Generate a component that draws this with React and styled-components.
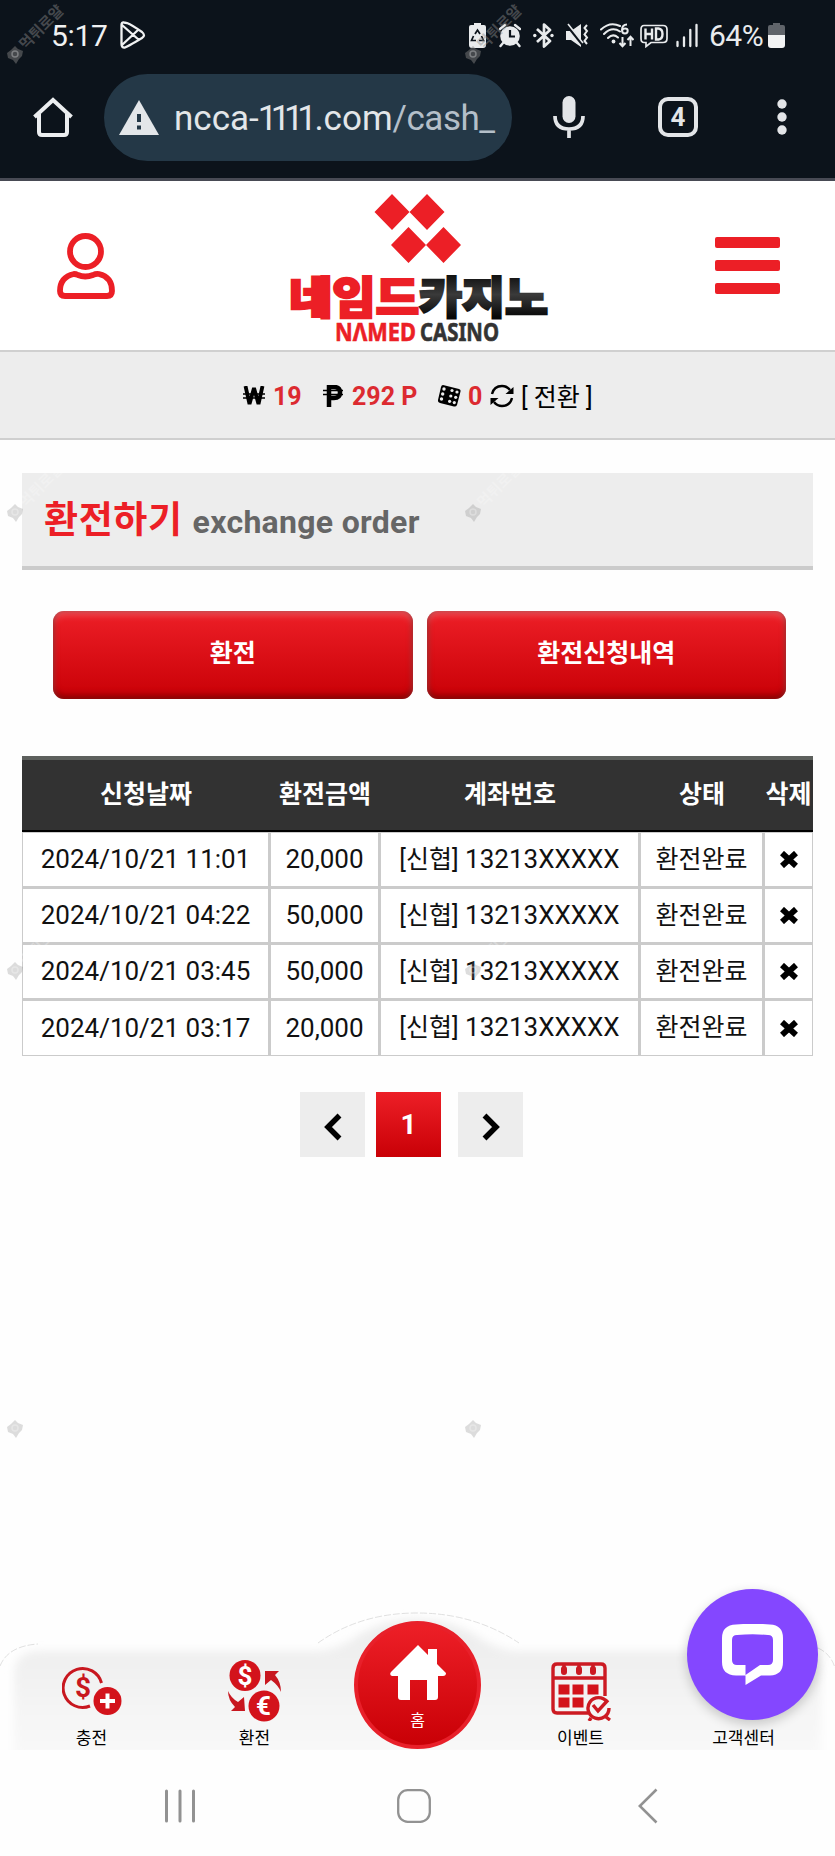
import React from 'react';
import styled, { createGlobalStyle } from 'styled-components';

const orders = [
  { date: '2024/10/21 11:01', amount: '20,000' },
  { date: '2024/10/21 04:22', amount: '50,000' },
  { date: '2024/10/21 03:45', amount: '50,000' },
  { date: '2024/10/21 03:17', amount: '20,000' },
];

const marks = [0, 1, 2, 3];

function StatusIcons() {
  return (
    <>
      <Icon width="17" height="25" viewBox="0 0 17 25" $left={0}>
        <path d="M5 0h7v2h3q2 0 2 2v18q0 3-3 3H3q-3 0-3-3V4q0-2 2-2h3z" fill="#e9ebed" />
        <path
          d="M6 11l2.500-4 2.500 4M12.500 13l2 4.500h-4.500M7 17.500H2.500l2-4.500"
          fill="none"
          stroke="#0c131b"
          strokeWidth="1.700"
        />
      </Icon>
      <Icon width="22" height="25" viewBox="0 0 22 25" $left={13}>
        <circle cx="11" cy="13" r="9.800" fill="#e9ebed" />
        <path
          d="M1 6l5-4M21 6l-5-4M4 20l-2.500 3M18 20l2.500 3"
          stroke="#e9ebed"
          strokeWidth="2.400"
          strokeLinecap="round"
        />
        <path d="M11 7v6.500h5" fill="none" stroke="#0c131b" strokeWidth="2.200" />
      </Icon>
      <Icon width="21" height="25" viewBox="0 0 21 25" $left={12}>
        <path
          d="M4 6l13 12-6 5.500V1.500L17 7 4 19"
          fill="none"
          stroke="#e9ebed"
          strokeWidth="2.700"
          strokeLinejoin="round"
        />
        <circle cx="1.800" cy="12.500" r="1.700" fill="#e9ebed" />
        <circle cx="19" cy="12.500" r="1.700" fill="#e9ebed" />
      </Icon>
      <Icon width="23" height="25" viewBox="0 0 23 25" $left={12}>
        <path d="M0 8h5l10-7v23L5 17H0z" fill="#e9ebed" />
        <path d="M1 2l16 20" stroke="#0c131b" strokeWidth="3" />
        <path d="M2 1l15 19" stroke="#e9ebed" strokeWidth="1.600" />
        <path
          d="M21 2l-2.500 3 2.500 3-2.500 3.500 2.500 3-2.500 3.500 2.500 3"
          fill="none"
          stroke="#e9ebed"
          strokeWidth="2"
        />
      </Icon>
      <Icon width="34" height="25" viewBox="0 0 34 25" $left={11}>
        <path
          d="M1 6.500Q10-2 20 3M4 11Q12 3 20 8.500M8 15q5-5 10-.5"
          fill="none"
          stroke="#e9ebed"
          strokeWidth="2"
          strokeLinecap="round"
        />
        <circle cx="13.500" cy="18.500" r="1.900" fill="#e9ebed" />
        <path
          d="M27 1.500q-5 0-5 5.500 0 3.500 3 3.500 2.700 0 2.700-2.700 0-2.300-2.700-2.300-2 0-3 2M22.500 14v9M19.500 20l3 3.200 3-3.200M30.500 23v-9M27.500 17l3-3.200 3 3.200"
          fill="none"
          stroke="#e9ebed"
          strokeWidth="2"
        />
      </Icon>
      <Icon width="28" height="25" viewBox="0 0 28 25" $left={6}>
        <path
          d="M4 2.500h19q4 0 4 4v9q0 4-4 4H11l-5 4v-4H4q-3 0-3-4v-9q0-4 3-4z"
          fill="none"
          stroke="#e9ebed"
          strokeWidth="1.700"
        />
        <path
          d="M5.500 5.500v11M12 5.500v11M5.500 11H12M16 5.500v11h2.500q4-.5 4-5.500t-4-5.500z"
          fill="none"
          stroke="#e9ebed"
          strokeWidth="2.400"
        />
      </Icon>
      <Icon width="22" height="25" viewBox="0 0 22 25" $left={8}>
        <path
          d="M1.500 19v4M8 14.500V23M14.300 7v16M20.500 2v21"
          stroke="#e9ebed"
          strokeWidth="2.300"
          strokeLinecap="round"
        />
      </Icon>
      <Percent>64%</Percent>
      <Icon width="17" height="25" viewBox="0 0 17 25" $left={0}>
        <path d="M5 0h7v2h3q2 0 2 2v8H0V4q0-2 2-2h3z" fill="#60646a" />
        <path d="M0 12h17v10q0 3-3 3H3q-3 0-3-3z" fill="#f2f3f4" />
      </Icon>
    </>
  );
}

function Logo() {
  return (
    <LogoBox width="260" height="154" viewBox="0 0 260 154">
      <defs>
        <linearGradient id="ink" x1="0" y1="0" x2="0" y2="1">
          <stop offset="0.2" stopColor="#111" />
          <stop offset="0.5" stopColor="#3a3a3a" />
          <stop offset="0.85" stopColor="#080808" />
        </linearGradient>
      </defs>
      <path
        d="M103 2l17.500 18L103 38 85.500 20zM138 2l17.500 18L138 38l-17.500-18zM119.500 35l17.500 18-17.500 18L102 53zM154.500 35L172 53l-17.500 18L137 53z"
        fill="#ec1f26"
      />
      <LogoText x="0" y="121.500" textLength="130" lengthAdjust="spacingAndGlyphs" fill="#ec1f26" stroke="#ec1f26">
        네임드
      </LogoText>
      <LogoText x="130" y="121.500" textLength="129" lengthAdjust="spacingAndGlyphs" fill="url(#ink)" stroke="url(#ink)">
        카지노
      </LogoText>
      <LogoSub x="46" y="149" textLength="81" lengthAdjust="spacingAndGlyphs" fill="#ec1f26" stroke="#ec1f26">
        NΛMED
      </LogoSub>
      <LogoSub x="131" y="149" textLength="79" lengthAdjust="spacingAndGlyphs" fill="#333" stroke="#333">
        CASINO
      </LogoSub>
    </LogoBox>
  );
}

function Watermark() {
  return (
    <MarkLayer>
      {marks.map((row) =>
        [0, 1].map((col) => (
          <Mark key={`${row}-${col}`} $row={row} $col={col} $dark={row === 0}>
            <svg width="18" height="20" viewBox="0 0 18 20">
              <path d="M9 1l3 3 5 2-1 5-3 3-3 5-3-4-5-2-1-5 4-3z" fill="currentColor" />
              <circle cx="9" cy="9" r="3" fill="none" stroke="#fff" strokeOpacity="0.3" strokeWidth="1.500" />
            </svg>
            <MarkText $dark={row === 0}>먹튀로얄</MarkText>
          </Mark>
        ))
      )}
    </MarkLayer>
  );
}

function TabBar() {
  return (
    <BottomBar>
      <BarShape width="835" height="160" viewBox="0 0 835 160">
        <defs>
          <linearGradient id="bar" x1="0" y1="0" x2="0" y2="1">
            <stop offset="0" stopColor="#ececec" />
            <stop offset="1" stopColor="#fafafa" />
          </linearGradient>
          <filter id="soft" x="-5%" y="-10%" width="110%" height="120%">
            <feGaussianBlur stdDeviation="4" />
          </filter>
          <clipPath id="cut">
            <rect width="835" height="151" />
          </clipPath>
        </defs>
        <g clipPath="url(#cut)">
          <path
            d="M14 165V76q0-24 26-24h280q22-3 42-18 54-28 110 0 20 15 42 18h280q26 0 27 24v89z"
            fill="url(#bar)"
            filter="url(#soft)"
          />
        </g>
        <path
          d="M0 67Q8 47 38 45M318 44Q360 14 417 14T519 44M818 49q13 6 17 20"
          fill="none"
          stroke="#d2d2d2"
          strokeWidth="0.700"
          strokeDasharray="7 2"
        />
      </BarShape>
      <Tab>
        <svg width="60" height="50" viewBox="0 0 60 50">
          <path
            d="M39.500 17A19.500 19.500 0 1 0 28 40"
            fill="none"
            stroke="#c8171f"
            strokeWidth="3"
          />
          <TabSign x="21" y="31" $size={28} fill="#c8171f" textAnchor="middle">$</TabSign>
          <circle cx="45.500" cy="35" r="14" fill="#d3131b" />
          <path d="M45.500 27.500v15M38 35h15" stroke="#fff" strokeWidth="4" />
        </svg>
        <TabLabel>충전</TabLabel>
      </Tab>
      <Tab>
        <svg width="54" height="62" viewBox="0 0 54 62">
          <circle cx="17" cy="15.500" r="15.500" fill="#d3131b" />
          <TabSign x="17" y="24.500" $size={26} fill="#fff" textAnchor="middle">$</TabSign>
          <circle cx="36" cy="46" r="15.500" fill="#d3131b" />
          <TabSign x="35.500" y="55" $size={26} fill="#fff" textAnchor="middle">€</TabSign>
          <path
            d="M37 11h14l-4 4q6 7 6 17-3-7-10-12l-6 5zM17 51H3l4-4Q0 40 0 31q3 7 10 11l6-5z"
            fill="#c8171f"
          />
        </svg>
        <TabLabel>환전</TabLabel>
      </Tab>
      <HomeTab>
        <HomeButton>
          <svg width="56" height="56" viewBox="0 0 56 56">
            <path
              d="M28 0l10 10V4h9v15l9 9q0 3-3 3h-5v21q0 3-3 3h-8V35H20v20h-9q-3 0-3-3V31H2q-3-1-1-4z"
              fill="#fff"
            />
          </svg>
          <HomeLabel>홈</HomeLabel>
        </HomeButton>
      </HomeTab>
      <Tab>
        <svg width="60" height="60" viewBox="0 0 60 60">
          <path
            d="M37 52H6q-4 0-4-4V7q0-4 4-4h44q4 0 4 4v28M2 17h52M13 3v6M28 3v6M42 3v6"
            fill="none"
            stroke="#cc1a22"
            strokeWidth="3.400"
          />
          <path
            d="M13 8v3M28 8v3M42 8v3"
            stroke="#cc1a22"
            strokeWidth="6"
            strokeLinecap="round"
          />
          <path
            d="M7.500 23.500h11v10h-11zM21.500 23.500h11v10h-11zM36.500 23.500h11v10h-11zM7.500 36.500h11v10h-11zM21.500 36.500h11v10h-11z"
            fill="#d3131b"
          />
          <path
            d="M56 41a10.500 10.500 0 1 0 2 6M42 44l5 6 10-11M40 57l-2 3M55 56l4 3"
            fill="none"
            stroke="#cc1a22"
            strokeWidth="3.400"
          />
        </svg>
        <TabLabel>이벤트</TabLabel>
      </Tab>
      <Tab>
        <TabLabel>고객센터</TabLabel>
      </Tab>
      <ChatButton>
        <svg width="62" height="62" viewBox="0 0 62 62">
          <path
            d="M14 .5Q31-1 48 .5 61 1 61 14v24q0 13-13 13.500h-9L23.500 61v-9.500H14Q0 51 0 38V14Q0 1 14 .5zM15 11q-5 0-5 5v20q0 5 5 5h8.500v10L38 41h8q5 0 5-5V16q0-5-5-5-15-1.500-31 0z"
            fill="#fff"
            fillRule="evenodd"
          />
        </svg>
      </ChatButton>
    </BottomBar>
  );
}

function App() {
  return (
    <Page>
      <GlobalStyle />
      <StatusBar>
        <Clock>5:17</Clock>
        <svg width="26" height="28" viewBox="0 0 26 28">
          <path
            d="M4 1.500q-2.500-.5-2.500 2.500v19q0 4 3.500 3.500 2-.5 17-9.500 4-2.500 0-6Q12 4 7 2zM2 4l17 15M2 24L18 9"
            fill="none"
            stroke="#f0f1f2"
            strokeWidth="2.300"
          />
        </svg>
        <StatusRight>
          <StatusIcons />
        </StatusRight>
      </StatusBar>
      <AddressBar>
        <svg width="40" height="40" viewBox="0 0 40 40">
          <path
            d="M1.500 20L20 3l18.500 17M6 17v18q0 3 3 3h22q3 0 3-3V17"
            fill="none"
            stroke="#eceef0"
            strokeWidth="4"
          />
        </svg>
        <UrlBox>
          <svg width="40" height="35" viewBox="0 0 40 35">
            <path d="M20 0l20 35H0z" fill="#e3e6e9" />
            <path d="M20 14v8M20 25.500v4" stroke="#243847" strokeWidth="4" />
          </svg>
          <Url>
            ncca-<b>1111</b>.com<span>/cash_</span>
          </Url>
        </UrlBox>
        <MicIcon width="32" height="42" viewBox="0 0 32 42">
          <rect x="9.500" width="13" height="27" rx="6.500" fill="#e3e5e8" />
          <path
            d="M2 20q0 13 14 13t14-13M16 33v9"
            fill="none"
            stroke="#e3e5e8"
            strokeWidth="3.700"
          />
        </MicIcon>
        <TabCount>4</TabCount>
        <svg width="10" height="36" viewBox="0 0 10 36">
          <circle cx="5" cy="5" r="4.700" fill="#e3e5e8" />
          <circle cx="5" cy="18" r="4.700" fill="#e3e5e8" />
          <circle cx="5" cy="31" r="4.700" fill="#e3e5e8" />
        </svg>
      </AddressBar>
      <Header>
        <svg width="58" height="66" viewBox="0 0 58 66">
          <circle cx="28.500" cy="18.500" r="15.500" fill="none" stroke="#ec1f26" strokeWidth="5.800" />
          <path
            d="M17 41q-14 3-14 17 0 5 5 5h42q5 0 5-5 0-14-13-17-3-.5-6 1-8 3-15 0-2-1-4-1z"
            fill="none"
            stroke="#ec1f26"
            strokeWidth="5.800"
          />
        </svg>
        <Logo />
        <Menu>
          <i />
          <i />
          <i />
        </Menu>
      </Header>
      <Wallet>
        <svg width="22" height="20" viewBox="0 0 22 20">
          <path d="M2.500 0L6.500 18 11 2l4.500 16 4-18" fill="none" stroke="#000" strokeWidth="3.800" strokeLinejoin="bevel" />
          <path d="M0 8h22M0 12h22" stroke="#000" strokeWidth="1.500" />
        </svg>
        <Value $left={8} $width={28}>19</Value>
        <PointIcon width="20" height="22" viewBox="0 0 20 22">
          <path
            d="M6 22V2h5q6 0 6 5.500T11 13H6"
            fill="none"
            stroke="#000"
            strokeWidth="4.500"
          />
          <path d="M0 5.500h20M0 9.500h20" stroke="#000" strokeWidth="1.700" />
        </PointIcon>
        <Value $left={9} $width={66}>292 P</Value>
        <DiceIcon width="23" height="22" viewBox="0 0 23 22">
          <path d="M5 0l16 4q2 .5 1.500 2.500L19 20q-1 2-3 1.500L2 18Q-.5 17 0 15L3 2q.5-2 2-2z" fill="#000" />
          <g fill="#ededed">
            <circle cx="6" cy="4" r="1.700" />
            <circle cx="4.700" cy="9" r="1.700" />
            <circle cx="3.500" cy="14" r="1.700" />
            <circle cx="14" cy="5.500" r="1.600" />
            <circle cx="19" cy="7" r="1.600" />
            <circle cx="12.800" cy="11" r="1.600" />
            <circle cx="17.700" cy="12.300" r="1.600" />
            <circle cx="11.600" cy="16.300" r="1.600" />
            <circle cx="16.300" cy="17.600" r="1.600" />
          </g>
        </DiceIcon>
        <Value $left={7} $width={15}>0</Value>
        <RefreshIcon width="24" height="24" viewBox="0 0 24 24">
          <path d="M2 10Q4 2 12 2q5 0 8 4M22 14q-2 8-10 8-5 0-8-4" fill="none" stroke="#000" strokeWidth="2.400" />
          <path d="M23.500 3v7h-8zM.5 21v-7h8z" fill="#000" />
        </RefreshIcon>
        <Convert>[ 전환 ]</Convert>
      </Wallet>
      <Content>
        <Title>
          환전하기 <span>exchange order</span>
        </Title>
        <Buttons>
          <RedButton>환전</RedButton>
          <RedButton>환전신청내역</RedButton>
        </Buttons>
        <Table>
          <colgroup>
            <col width="248" />
            <col width="110" />
            <col width="260" />
            <col width="124" />
            <col width="49" />
          </colgroup>
          <thead>
            <tr>
              <th>신청날짜</th>
              <th>환전금액</th>
              <th>계좌번호</th>
              <th>상태</th>
              <th>삭제</th>
            </tr>
          </thead>
          <tbody>
            {orders.map((order) => (
              <tr key={order.date}>
                <td>{order.date}</td>
                <td>{order.amount}</td>
                <td>
                  <Ko>[신협]</Ko> 13213XXXXX
                </td>
                <td>
                  <Ko>환전완료</Ko>
                </td>
                <td>
                  <svg width="18" height="17" viewBox="0 0 18 17">
                    <path d="M2 2l14 13M16 2L2 15" stroke="#000" strokeWidth="5.800" />
                  </svg>
                </td>
              </tr>
            ))}
          </tbody>
        </Table>
        <Paging>
          <PageButton>
            <svg width="18" height="28" viewBox="0 0 18 28">
              <path d="M15.500 2.500L4 14l11.500 11.500" fill="none" stroke="#000" strokeWidth="5.500" />
            </svg>
          </PageButton>
          <PageButton $active>1</PageButton>
          <PageButton $next>
            <svg width="18" height="28" viewBox="0 0 18 28">
              <path d="M2.500 2.500L14 14 2.500 25.500" fill="none" stroke="#000" strokeWidth="5.500" />
            </svg>
          </PageButton>
        </Paging>
      </Content>
      <TabBar />
      <SystemNav>
        <svg width="32" height="34" viewBox="0 0 32 34">
          <path d="M2.500 2v30M16 2v30M29.500 2v30" stroke="#929292" strokeWidth="3" strokeLinecap="round" />
        </svg>
        <svg width="34" height="34" viewBox="0 0 34 34">
          <rect x="1.200" y="1.200" width="31.600" height="31.600" rx="9.500" fill="none" stroke="#929292" strokeWidth="2.300" />
        </svg>
        <svg width="20" height="36" viewBox="0 0 20 36">
          <path d="M18.500 1.500L1.800 18l16.700 16.500" fill="none" stroke="#929292" strokeWidth="2.600" />
        </svg>
      </SystemNav>
      <Watermark />
    </Page>
  );
}

export default App;

const GlobalStyle = createGlobalStyle`
  * {
    box-sizing: border-box;
  }
  body {
    margin: 0;
    background: #fefefe;
    font-family: Roboto, 'Noto Sans CJK KR', sans-serif;
  }
  svg {
    display: block;
    flex-shrink: 0;
  }
`;

const Page = styled.div`
  position: relative;
  display: flex;
  flex-direction: column;
  width: 835px;
  height: 1856px;
  overflow: hidden;
`;

const StatusBar = styled.div`
  display: flex;
  align-items: center;
  height: 70px;
  padding: 0 50px 0 51px;
  background: #0c131b;
`;

const Clock = styled.span`
  width: 69px;
  color: #f0f1f2;
  font-size: 30px;
  letter-spacing: -0.3px;
  white-space: nowrap;
`;

const StatusRight = styled.div`
  display: flex;
  align-items: center;
  margin-left: auto;
`;

const Icon = styled.svg`
  margin-left: ${({ $left }) => $left}px;
`;

const Percent = styled.span`
  width: 59px;
  margin-left: 11px;
  color: #e9ebed;
  font-size: 30px;
  letter-spacing: -0.5px;
  white-space: nowrap;
`;

const AddressBar = styled.div`
  display: flex;
  align-items: center;
  height: 111px;
  padding: 0 48px 14px 33px;
  border-bottom: 3px solid #484a54;
  background: #0c131b;
`;

const UrlBox = styled.div`
  display: flex;
  align-items: center;
  width: 409px;
  height: 87px;
  margin: 1px 0 0 31px;
  padding-left: 15px;
  border-radius: 44px;
  background: #243847;
`;

const Url = styled.span`
  margin: 2px 0 0 15px;
  color: #e3e6e9;
  font-size: 35px;
  white-space: nowrap;
  b {
    margin-left: -1px;
    font-weight: 400;
    letter-spacing: -6.5px;
    margin-right: 4px;
  }
  span {
    color: #b4bfc9;
    letter-spacing: -0.5px;
  }
`;

const MicIcon = styled.svg`
  margin-left: 41px;
`;

const TabCount = styled.div`
  display: flex;
  align-items: center;
  justify-content: center;
  width: 40px;
  height: 40px;
  margin: 0 79px 0 73px;
  border: 4px solid #e3e5e8;
  border-radius: 10px;
  color: #e3e5e8;
  font-size: 26px;
  font-weight: 700;
`;

const Header = styled.header`
  display: flex;
  align-items: center;
  justify-content: space-between;
  height: 171px;
  padding: 0 55px 0 57px;
  border-bottom: 2px solid #d0d0d0;
  background: #fff;
`;

const LogoBox = styled.svg`
  margin: 7px 0 0 8px;
  overflow: visible;
`;

const LogoText = styled.text`
  font-family: 'Noto Sans CJK KR', sans-serif;
  font-size: 44px;
  font-weight: 900;
  stroke-width: 2.4px;
`;

const LogoSub = styled.text`
  font-family: 'Noto Sans', sans-serif;
  font-size: 25px;
  font-weight: 700;
  stroke-width: 0.6px;
`;

const Menu = styled.div`
  display: flex;
  flex-direction: column;
  gap: 12px;
  width: 65px;
  i {
    height: 11px;
    border-radius: 2px;
    background: #ec1f26;
  }
`;

const Wallet = styled.div`
  display: flex;
  align-items: center;
  height: 88px;
  padding: 2px 0 0 243px;
  border-bottom: 2px solid #cfcfcf;
  background: #ededed;
  font-size: 25px;
  white-space: nowrap;
`;

const Value = styled.b`
  width: ${({ $width }) => $width}px;
  margin-left: ${({ $left }) => $left}px;
  color: #dc2a30;
`;

const PointIcon = styled.svg`
  margin-left: 22px;
`;

const DiceIcon = styled.svg`
  margin-left: 20px;
`;

const RefreshIcon = styled.svg`
  margin-left: 7px;
`;

const Convert = styled.span`
  margin: -3px 0 0 7px;
  font-size: 25px;
`;

const Content = styled.main`
  flex: 1;
  padding: 33px 22px 0;
`;

const Title = styled.h2`
  display: flex;
  align-items: baseline;
  height: 97px;
  margin: 0;
  padding: 21px 0 0 22px;
  border-bottom: 4px solid #cbcbcb;
  background: #ededed;
  color: #ec1f26;
  font-size: 37px;
  letter-spacing: 0.6px;
  line-height: 54px;
  white-space: nowrap;
  span {
    margin-left: 10px;
    color: #666;
    font-size: 32px;
    letter-spacing: 0.3px;
  }
`;

const Buttons = styled.div`
  display: flex;
  gap: 14px;
  padding: 41px 27px 57px 31px;
`;

const RedButton = styled.button`
  flex: 1;
  height: 88px;
  padding: 0 0 8px;
  border: 0;
  border-radius: 11px;
  background: linear-gradient(#ed1f27, #c90006);
  box-shadow: inset 0 4px 7px rgba(255, 255, 255, 0.25), inset 0 -4px 6px rgba(90, 0, 0, 0.5),
    inset 0 0 5px rgba(90, 0, 0, 0.5);
  color: #fff;
  font-family: inherit;
  font-size: 25px;
  font-weight: 700;
`;

const Table = styled.table`
  width: 791px;
  table-layout: fixed;
  border-collapse: separate;
  border-spacing: 0;
  font-size: 26px;
  text-align: center;
  white-space: nowrap;
  th {
    height: 76px;
    padding: 0;
    border-top: 4px solid #5d605d;
    border-bottom: 2px solid #000;
    background: #323232;
    color: #fff;
    font-size: 25px;
    line-height: 30px;
  }
  td {
    height: 56px;
    padding: 0 0 1px;
    border: 1px solid #cbcbcb;
    border-right-width: 2px;
    border-bottom-width: 2px;
    background: #fff;
    color: #111;
    line-height: 30px;
  }
  td:last-child {
    border-right-width: 1px;
  }
  tr:last-child td {
    border-bottom-width: 1px;
  }
  td svg {
    margin: 1px auto 0;
  }
`;

const Ko = styled.span`
  font-size: 25px;
`;

const Paging = styled.div`
  display: flex;
  padding: 36px 0 0 278px;
`;

const PageButton = styled.button`
  display: flex;
  align-items: center;
  justify-content: center;
  width: 65px;
  height: 65px;
  margin-right: 11px;
  margin-left: ${({ $next }) => ($next ? '6px' : '0')};
  padding: ${({ $active }) => ($active ? '0' : '4px 0 0')};
  border: 0;
  background: ${({ $active }) => ($active ? 'linear-gradient(#ed1f27, #c90006)' : '#ededed')};
  color: #fff;
  font-family: inherit;
  font-size: 28px;
  font-weight: 700;
`;

const BottomBar = styled.nav`
  position: relative;
  display: grid;
  grid-template-columns: repeat(5, 163px);
  align-items: end;
  height: 151px;
  padding: 0 10px;
`;

const BarShape = styled.svg`
  position: absolute;
  top: 0;
  left: 0;
`;

const Tab = styled.div`
  position: relative;
  display: grid;
  grid-template-rows: 62px 28px;
  place-items: center;
  svg {
    grid-row: 1;
  }
`;

const TabSign = styled.text`
  font-family: Roboto, sans-serif;
  font-size: ${({ $size }) => $size}px;
  font-weight: 700;
`;

const TabLabel = styled.span`
  grid-row: 2;
  margin-top: 5px;
  color: #000;
  font-size: 17px;
  line-height: 23px;
`;

const HomeTab = styled.div`
  position: relative;
  display: flex;
  justify-content: center;
`;

const HomeButton = styled.div`
  display: flex;
  flex-direction: column;
  align-items: center;
  width: 127px;
  height: 128px;
  margin: 0 0 1px;
  padding-top: 20px;
  border: 4px solid #e8202a;
  border-radius: 50%;
  background: linear-gradient(#ed1f27, #c90006);
`;

const HomeLabel = styled.span`
  margin-top: 9px;
  color: #fff;
  font-size: 16px;
  line-height: 22px;
`;

const ChatButton = styled.div`
  position: absolute;
  top: -10px;
  left: 687px;
  display: flex;
  align-items: center;
  justify-content: center;
  width: 131px;
  height: 131px;
  border-radius: 50%;
  background: #8447ff;
  box-shadow: 0 4px 12px rgba(0, 0, 0, 0.2);
`;

const SystemNav = styled.div`
  display: grid;
  grid-template-columns: 233px 241px auto;
  align-items: center;
  height: 106px;
  padding: 6px 0 0 164px;
`;

/* tiled stamp over the whole screen */
const MarkLayer = styled.div`
  position: absolute;
  inset: 0;
  pointer-events: none;
`;

const Mark = styled.div`
  position: absolute;
  top: ${({ $row }) => 45 + $row * 458}px;
  left: ${({ $col }) => 6 + $col * 458}px;
  color: ${({ $dark }) => ($dark ? 'rgba(125, 125, 125, 0.5)' : 'rgba(120, 120, 120, 0.25)')};
`;

const MarkText = styled.span`
  position: absolute;
  top: -7px;
  left: 16px;
  transform: rotate(-45deg);
  transform-origin: 0 50%;
  color: ${({ $dark }) => ($dark ? 'rgba(140, 140, 140, 0.45)' : 'rgba(255, 255, 255, 0.25)')};
  font-size: 15px;
  font-weight: 700;
  line-height: 18px;
  white-space: nowrap;
`;
